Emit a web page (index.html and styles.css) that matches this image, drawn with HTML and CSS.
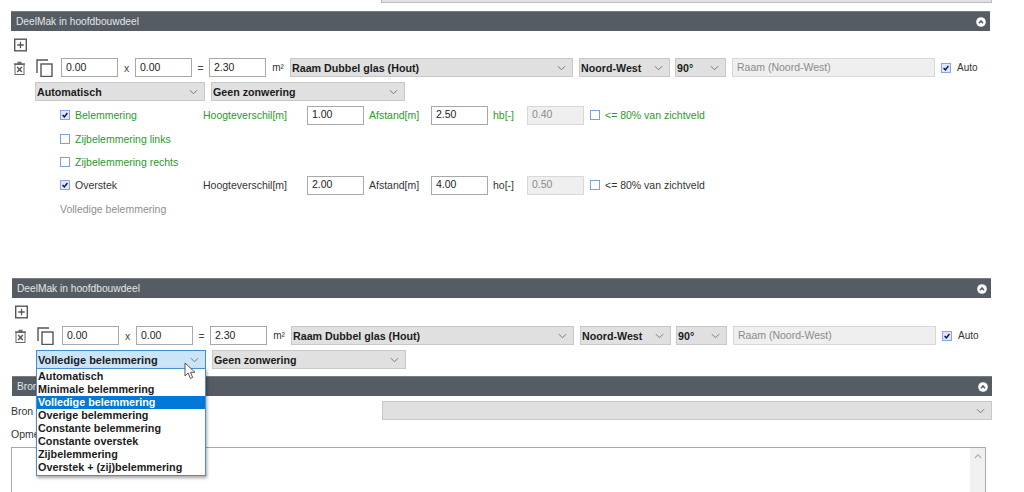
FILE: index.html
```html
<!DOCTYPE html>
<html lang="nl">
<head>
<meta charset="utf-8">
<title>DeelMak</title>
<link rel="stylesheet" href="styles.css">
</head>
<body>
<div class="page">
  <div class="top-stub"></div>

  <section class="panel panel-a">
    <header class="bar"><span>DeelMak in hoofdbouwdeel</span>
      <svg class="collapse" viewBox="0 0 10 10"><circle cx="5" cy="5" r="4.8" fill="#fff"/><path d="M3 6.2 5 4l2 2.2" fill="none" stroke="#555c63" stroke-width="1.6"/></svg>
    </header>
    <div class="tools"><svg class="plus" viewBox="0 0 14 14"><rect x=".75" y=".75" width="12.5" height="12.5" fill="#fff" stroke="#555" stroke-width="1.5"/><path d="M7 3.5v7M3.5 7h7" stroke="#555" stroke-width="1.4"/></svg></div>
    <div class="line">
      <svg class="trash" viewBox="0 0 11 14"><path d="M3.5 1.5h4M0 3h11" stroke="#666" stroke-width="1.3"/><rect x="1" y="3.5" width="9" height="10" fill="#fff" stroke="#666"/><path d="M3.2 6l4.6 5M7.8 6l-4.6 5" stroke="#555" stroke-width="1.4"/></svg>
      <svg class="copy" viewBox="0 0 17 18"><path d="M1 14V1h11" fill="none" stroke="#555" stroke-width="1.4"/><rect x="5" y="5" width="11" height="12.5" fill="#fff" stroke="#555" stroke-width="1.4"/></svg>
      <input class="num" value="0.00"><span class="op">x</span><input class="num" value="0.00"><span class="op eq">=</span><input class="num" value="2.30"><span class="unit">m²</span>
      <div class="sel s-type">Raam Dubbel glas (Hout)<svg class="chev" viewBox="0 0 10 6"><path d="M1 1l4 4 4-4" fill="none" stroke="#777" stroke-width="1.1"/></svg></div>
      <div class="sel s-dir">Noord-West<svg class="chev" viewBox="0 0 10 6"><path d="M1 1l4 4 4-4" fill="none" stroke="#777" stroke-width="1.1"/></svg></div>
      <div class="sel s-deg">90°<svg class="chev" viewBox="0 0 10 6"><path d="M1 1l4 4 4-4" fill="none" stroke="#777" stroke-width="1.1"/></svg></div>
      <input class="num off wide" value="Raam (Noord-West)" disabled>
      <span class="cb on auto-cb"><svg viewBox="0 0 10 10"><path d="M2 5l2.2 2.5L8 2.5" fill="none" stroke="#0b0b50" stroke-width="1.7"/></svg></span><span class="auto">Auto</span>
    </div>
    <div class="line two">
      <div class="sel s-mode">Automatisch<svg class="chev" viewBox="0 0 10 6"><path d="M1 1l4 4 4-4" fill="none" stroke="#777" stroke-width="1.1"/></svg></div>
      <div class="sel s-sun">Geen zonwering<svg class="chev" viewBox="0 0 10 6"><path d="M1 1l4 4 4-4" fill="none" stroke="#777" stroke-width="1.1"/></svg></div>
    </div>
    <div class="checks">
      <div class="crow green">
        <span class="cb on"><svg viewBox="0 0 10 10"><path d="M2 5l2.2 2.5L8 2.5" fill="none" stroke="#0b0b50" stroke-width="1.7"/></svg></span><span class="name">Belemmering</span>
        <span class="hv">Hoogteverschil[m]</span><input class="num" value="1.00"><span class="af">Afstand[m]</span><input class="num" value="2.50"><span class="hb">hb[-]</span><input class="num off" value="0.40" disabled>
        <span class="cb"></span><span class="pct">&lt;= 80% van zichtveld</span>
      </div>
      <div class="crow green"><span class="cb"></span><span class="name">Zijbelemmering links</span></div>
      <div class="crow green"><span class="cb"></span><span class="name">Zijbelemmering rechts</span></div>
      <div class="crow">
        <span class="cb on"><svg viewBox="0 0 10 10"><path d="M2 5l2.2 2.5L8 2.5" fill="none" stroke="#0b0b50" stroke-width="1.7"/></svg></span><span class="name">Overstek</span>
        <span class="hv">Hoogteverschil[m]</span><input class="num" value="2.00"><span class="af">Afstand[m]</span><input class="num" value="4.00"><span class="hb">ho[-]</span><input class="num off" value="0.50" disabled>
        <span class="cb"></span><span class="pct">&lt;= 80% van zichtveld</span>
      </div>
      <div class="crow grey">Volledige belemmering</div>
    </div>
  </section>

  <section class="panel panel-b">
    <header class="bar"><span>DeelMak in hoofdbouwdeel</span>
      <svg class="collapse" viewBox="0 0 10 10"><circle cx="5" cy="5" r="4.8" fill="#fff"/><path d="M3 6.2 5 4l2 2.2" fill="none" stroke="#555c63" stroke-width="1.6"/></svg>
    </header>
    <div class="tools"><svg class="plus" viewBox="0 0 14 14"><rect x=".75" y=".75" width="12.5" height="12.5" fill="#fff" stroke="#555" stroke-width="1.5"/><path d="M7 3.5v7M3.5 7h7" stroke="#555" stroke-width="1.4"/></svg></div>
    <div class="line">
      <svg class="trash" viewBox="0 0 11 14"><path d="M3.5 1.5h4M0 3h11" stroke="#666" stroke-width="1.3"/><rect x="1" y="3.5" width="9" height="10" fill="#fff" stroke="#666"/><path d="M3.2 6l4.6 5M7.8 6l-4.6 5" stroke="#555" stroke-width="1.4"/></svg>
      <svg class="copy" viewBox="0 0 17 18"><path d="M1 14V1h11" fill="none" stroke="#555" stroke-width="1.4"/><rect x="5" y="5" width="11" height="12.5" fill="#fff" stroke="#555" stroke-width="1.4"/></svg>
      <input class="num" value="0.00"><span class="op">x</span><input class="num" value="0.00"><span class="op eq">=</span><input class="num" value="2.30"><span class="unit">m²</span>
      <div class="sel s-type">Raam Dubbel glas (Hout)<svg class="chev" viewBox="0 0 10 6"><path d="M1 1l4 4 4-4" fill="none" stroke="#777" stroke-width="1.1"/></svg></div>
      <div class="sel s-dir">Noord-West<svg class="chev" viewBox="0 0 10 6"><path d="M1 1l4 4 4-4" fill="none" stroke="#777" stroke-width="1.1"/></svg></div>
      <div class="sel s-deg">90°<svg class="chev" viewBox="0 0 10 6"><path d="M1 1l4 4 4-4" fill="none" stroke="#777" stroke-width="1.1"/></svg></div>
      <input class="num off wide" value="Raam (Noord-West)" disabled>
      <span class="cb on auto-cb"><svg viewBox="0 0 10 10"><path d="M2 5l2.2 2.5L8 2.5" fill="none" stroke="#0b0b50" stroke-width="1.7"/></svg></span><span class="auto">Auto</span>
    </div>
    <div class="line two">
      <div class="sel s-mode open">Volledige belemmering<svg class="chev" viewBox="0 0 10 6"><path d="M1 1l4 4 4-4" fill="none" stroke="#777" stroke-width="1.1"/></svg>
        <ul class="menu">
          <li>Automatisch</li>
          <li>Minimale belemmering</li>
          <li class="cur">Volledige belemmering</li>
          <li>Overige belemmering</li>
          <li>Constante belemmering</li>
          <li>Constante overstek</li>
          <li>Zijbelemmering</li>
          <li>Overstek + (zij)belemmering</li>
        </ul>
        <svg class="pointer" viewBox="0 0 12 18"><path d="M1 1v13l3.2-3 2.2 5.5 2.3-1-2.2-5.2H11z" fill="#fff" stroke="#555" stroke-width="1"/></svg>
      </div>
      <div class="sel s-sun">Geen zonwering<svg class="chev" viewBox="0 0 10 6"><path d="M1 1l4 4 4-4" fill="none" stroke="#777" stroke-width="1.1"/></svg></div>
    </div>
  </section>

  <section class="panel panel-c">
    <header class="bar"><span>Bron</span>
      <svg class="collapse" viewBox="0 0 10 10"><circle cx="5" cy="5" r="4.8" fill="#fff"/><path d="M3 6.2 5 4l2 2.2" fill="none" stroke="#555c63" stroke-width="1.6"/></svg>
    </header>
    <div class="source"><span>Bron</span><div class="sel s-src"><svg class="chev" viewBox="0 0 10 6"><path d="M1 1l4 4 4-4" fill="none" stroke="#777" stroke-width="1.1"/></svg></div></div>
    <div class="note-label">Opmerkingen</div>
    <div class="note"><div class="scroll"><svg viewBox="0 0 10 6"><path d="M1 5l4-4 4 4" fill="none" stroke="#aaa" stroke-width="1.4"/></svg></div></div>
  </section>
</div>
</body>
</html>
```
FILE: styles.css
```css
* { box-sizing: border-box; }
html, body { margin: 0; height: 492px; overflow: hidden; background: #fff; }
body { font-family: "Liberation Sans", Arial, sans-serif; font-size: 10.5px; color: #333; }
.page { height: 492px; overflow: hidden; }
.top-stub { height: 3px; margin-left: 381px; width: 611px; background: #e2e2e2; border: 1px solid #bdbdbd; border-top: 0; }

.panel-a { margin: 8px 0 0 11px; width: 979px; height: 267px; }
.panel-b { margin: 0 0 0 12px; width: 979px; height: 98px; }
.panel-c { margin: 0 0 0 12px; width: 980px; }

.bar { height: 20px; background: #555c63; color: #e4e6e8; border-top: 1px solid #777d83; padding: 0 4px 0 5px; display: flex; align-items: center; justify-content: space-between; font-size: 10.2px; }
.collapse { width: 10px; height: 10px; }

.tools { height: 27px; padding: 7px 0 0 3px; }
.panel-b .tools { height: 28px; }
.plus { display: block; width: 13px; height: 14px; }

.line { display: flex; align-items: center; height: 19px; }
.trash { width: 11px; height: 14px; margin-left: 3px; flex: none; }
.copy { width: 17px; height: 18px; margin-left: 11px; margin-right: 8px; flex: none; }

.num { width: 57px; height: 19px; flex: none; border: 1px solid #a9a9a9; border-radius: 0; padding: 0 4px 2px; background: #fff; color: #222; font: 10.5px "Liberation Sans", Arial, sans-serif; outline: 0; }
.num.off { background: #efefef; border-color: #d8d8d8; color: #8a8a8a; }
.num.wide { width: 203px; margin-left: 6px; }

.op { width: 17px; flex: none; text-align: center; color: #444; }
.op.eq { width: 17px; margin-left: 0; }
.unit { width: 24px; flex: none; text-align: center; color: #333; font-size: 10px; }

.sel { position: relative; flex: none; height: 19px; display: flex; align-items: center; padding-left: 1px; background: #e0e0e0; border: 1px solid #c8c8c8; font-weight: 700; color: #1b1b1b; font-size: 10.7px; }
.chev { position: absolute; right: 6px; top: 6px; width: 9px; height: 6px; }
.s-type { width: 283px; }
.s-dir { width: 91px; margin-left: 6px; }
.s-deg { width: 51px; margin-left: 5px; }
.s-mode { width: 170px; }
.s-sun { width: 194px; margin-left: 6px; }
.s-src { width: 610px; }

.cb { display: inline-block; flex: none; width: 10px; height: 10px; background: #fff; border: 1px solid #7f9fe0; }
.cb.on { background: #dfe6fb; border-color: #8aa4e6; }
.cb svg { display: block; width: 8px; height: 8px; }
.auto-cb { margin-left: 6px; }
.auto { margin-left: 6px; color: #333; font-size: 10px; }

.two { margin-top: 5px; padding-left: 24px; }
.checks { padding: 2.5px 0 0 49px; }
.crow { display: flex; align-items: center; height: 23.4px; color: #333; }
.crow .name { margin-left: 5px; width: 128px; flex: none; }
.crow .hv { width: 104px; flex: none; }
.crow .af { width: 67px; padding-left: 5px; flex: none; }
.crow .hb { width: 39px; padding-left: 5px; flex: none; }
.crow .cb + .pct { margin-left: 5px; }
.crow .num + .cb { margin-left: 6px; }
.crow.green, .crow.green .pct { color: #2a9a2a; }
.crow.grey { color: #8f8f8f; }

.open { background: #cce4f7; border-color: #3d8fd0; font-size: 11px; }
.menu { position: absolute; z-index: 5; left: -1px; top: 17px; width: 170px; margin: 0; padding: 1px 0; list-style: none; background: #fff; border: 1px solid #4a90d0; box-shadow: 1px 2px 3px rgba(0,0,0,.35); font-size: 10.8px; line-height: 13px; }
.menu li { padding-left: 1px; height: 13px; white-space: nowrap; }
.menu .cur { background: #0078d7; color: #fff; }
.pointer { position: absolute; z-index: 6; left: 147px; top: 11px; width: 12px; height: 18px; }

.source { display: flex; justify-content: space-between; align-items: center; margin-top: 5px; height: 19px; }
.source > span { margin-left: -1px; }
.note-label { margin: 7px 0 0 -1px; height: 14px; line-height: 14px; }
.note { position: relative; margin: 6px 0 0 -1px; width: 975px; height: 60px; border: 1px solid #a9a9a9; }
.scroll { position: absolute; right: 0; top: 0; bottom: 0; width: 15px; background: #f0f0f0; }
.scroll svg { display: block; width: 8px; height: 5px; margin: 6px auto 0; }
```
